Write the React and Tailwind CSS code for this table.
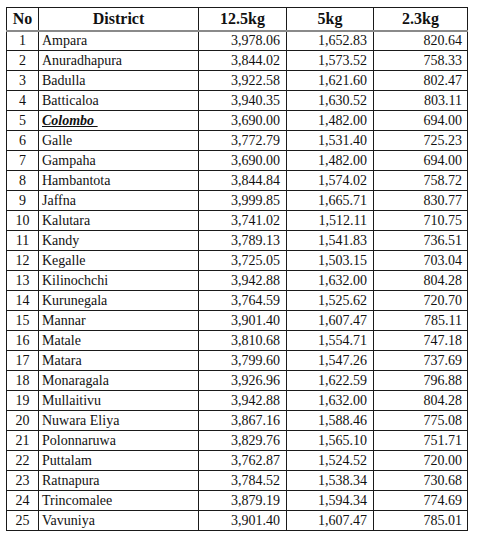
const rows = [
  [1, "Ampara", "3,978.06", "1,652.83", "820.64"],
  [2, "Anuradhapura", "3,844.02", "1,573.52", "758.33"],
  [3, "Badulla", "3,922.58", "1,621.60", "802.47"],
  [4, "Batticaloa", "3,940.35", "1,630.52", "803.11"],
  [5, "Colombo", "3,690.00", "1,482.00", "694.00"],
  [6, "Galle", "3,772.79", "1,531.40", "725.23"],
  [7, "Gampaha", "3,690.00", "1,482.00", "694.00"],
  [8, "Hambantota", "3,844.84", "1,574.02", "758.72"],
  [9, "Jaffna", "3,999.85", "1,665.71", "830.77"],
  [10, "Kalutara", "3,741.02", "1,512.11", "710.75"],
  [11, "Kandy", "3,789.13", "1,541.83", "736.51"],
  [12, "Kegalle", "3,725.05", "1,503.15", "703.04"],
  [13, "Kilinochchi", "3,942.88", "1,632.00", "804.28"],
  [14, "Kurunegala", "3,764.59", "1,525.62", "720.70"],
  [15, "Mannar", "3,901.40", "1,607.47", "785.11"],
  [16, "Matale", "3,810.68", "1,554.71", "747.18"],
  [17, "Matara", "3,799.60", "1,547.26", "737.69"],
  [18, "Monaragala", "3,926.96", "1,622.59", "796.88"],
  [19, "Mullaitivu", "3,942.88", "1,632.00", "804.28"],
  [20, "Nuwara Eliya", "3,867.16", "1,588.46", "775.08"],
  [21, "Polonnaruwa", "3,829.76", "1,565.10", "751.71"],
  [22, "Puttalam", "3,762.87", "1,524.52", "720.00"],
  [23, "Ratnapura", "3,784.52", "1,538.34", "730.68"],
  [24, "Trincomalee", "3,879.19", "1,594.34", "774.69"],
  [25, "Vavuniya", "3,901.40", "1,607.47", "785.01"],
];

export default function App() {
  return (
    <div className="bg-white w-[487px] h-[541px] pl-[6px] pt-[7px] [font-family:'Liberation_Serif',serif] text-[#111]">
      <table className="border-collapse table-fixed border border-[#1a1a1a] text-[14px] leading-none">
        <colgroup>
          <col className="w-[32px]" />
          <col className="w-[160px]" />
          <col className="w-[88px]" />
          <col className="w-[87px]" />
          <col className="w-[94px]" />
        </colgroup>
        <thead>
          <tr className="h-[23px] border-b-2 border-b-[#8a8a8a] font-bold text-[16px]">
            <th className="border-r border-[#1a1a1a] text-center">No</th>
            <th className="border-r border-[#1a1a1a] text-center">District</th>
            <th className="border-r border-[#1a1a1a] text-center">12.5kg</th>
            <th className="border-r border-[#1a1a1a] text-center">5kg</th>
            <th className="text-center">2.3kg</th>
          </tr>
        </thead>
        <tbody>
          {rows.map(([no, name, a, b, c]) => (
            <tr key={no} className="h-[20px] border-t border-[#1a1a1a]">
              <td className="border-r border-[#1a1a1a] text-center">{no}</td>
              <td className="border-r border-[#1a1a1a] pl-[3px]">
                {name === "Colombo" ? (
                  <span className="font-bold italic underline">Colombo&nbsp;</span>
                ) : (
                  name
                )}
              </td>
              <td className="border-r border-[#1a1a1a] text-right pr-[6px]">{a}</td>
              <td className="border-r border-[#1a1a1a] text-right pr-[6px]">{b}</td>
              <td className="text-right pr-[5px]">{c}</td>
            </tr>
          ))}
        </tbody>
      </table>
    </div>
  );
}
